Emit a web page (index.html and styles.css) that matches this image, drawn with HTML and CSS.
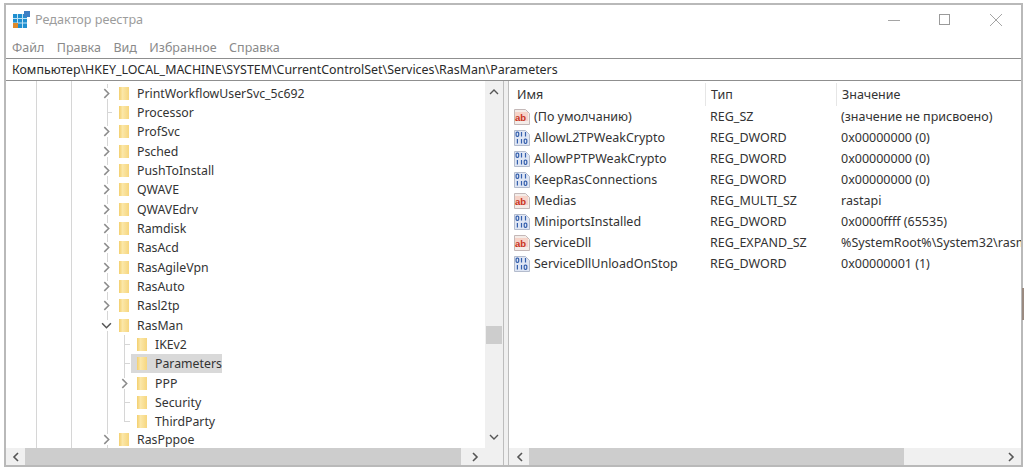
FILE: index.html
```html
<!DOCTYPE html>
<html lang="ru">
<head>
<meta charset="utf-8">
<title>Редактор реестра</title>
<link rel="stylesheet" href="styles.css">
</head>
<body>
<svg class="defs" width="0" height="0">
  <defs>
    <linearGradient id="fg" x1="0" x2="1" y1="0" y2="0">
      <stop offset="0" stop-color="#f3cf6e"/>
      <stop offset=".35" stop-color="#fbe7a8"/>
      <stop offset="1" stop-color="#f6d67f"/>
    </linearGradient>
  </defs>
  <symbol id="folder" viewBox="0 0 10 13">
    <path d="M0 0h10v13H0z" fill="url(#fg)"/>
  </symbol>
  <symbol id="chev-r" viewBox="0 0 10 10"><path d="M3 1l4 4-4 4" fill="none" stroke="#8c8c8c" stroke-width="1.4"/></symbol>
  <symbol id="chev-d" viewBox="0 0 10 10"><path d="M1 3l4 4 4-4" fill="none" stroke="#555" stroke-width="1.4"/></symbol>
  <symbol id="ic-bin" viewBox="0 0 18 18">
    <path d="M1.500 1.500h11l4 4v11h-15z" fill="#dfe6f4" stroke="#b4bccd"/>
    <g fill="none" stroke="#3560ad" stroke-width="1.200">
      <rect x="3.100" y="3.100" width="2.600" height="4.200" rx="1"/>
      <path d="M8.500 3v4.500M12.500 3v4.500"/>
      <path d="M4.400 10v4.500M8.500 10v4.500"/>
      <rect x="11.200" y="10.100" width="2.600" height="4.200" rx="1"/>
    </g>
  </symbol>
</svg>
<div class="sliver"></div>
<div class="window">
  <header class="titlebar">
    <svg class="appicon" width="17" height="17" viewBox="0 0 17 17">
      <rect x="0" y="3" width="14" height="14" fill="#1f8fd0"/>
      <path d="M0 7.500h14M0 12h14M4.500 3v14M9.500 3v14" stroke="#bfe3f5" stroke-width="1"/>
      <rect x="0" y="12" width="5" height="5" fill="#e08a2a"/>
      <rect x="11" y="0" width="6" height="6" fill="#3d7fc4"/>
    </svg>
    <span class="title">Редактор реестра</span>
    <div class="winctl">
      <svg width="16" height="16" viewBox="0 0 16 16"><path d="M2 8.500h12" stroke="#a5a5a5"/></svg>
      <svg width="16" height="16" viewBox="0 0 16 16"><rect x="2.500" y="2.500" width="10" height="10" fill="none" stroke="#9a9a9a"/></svg>
      <svg width="16" height="16" viewBox="0 0 16 16"><path d="M2 2l12 12M14 2L2 14" stroke="#a5a5a5"/></svg>
    </div>
  </header>
  <nav class="menu">
    <span>Файл</span><span>Правка</span><span>Вид</span><span>Избранное</span><span>Справка</span>
  </nav>
  <div class="address">Компьютер\HKEY_LOCAL_MACHINE\SYSTEM\CurrentControlSet\Services\RasMan\Parameters</div>
  <main class="panes">
    <section class="pane pane-left">
      <div class="pane-body">
        <ul class="tree">
          <li class="row"><svg class="chev"><use href="#chev-r"/></svg><svg class="fld"><use href="#folder"/></svg><span>PrintWorkflowUserSvc_5c692</span></li>
          <li class="row leaf"><i class="chev"></i><svg class="fld"><use href="#folder"/></svg><span>Processor</span></li>
          <li class="row"><svg class="chev"><use href="#chev-r"/></svg><svg class="fld"><use href="#folder"/></svg><span>ProfSvc</span></li>
          <li class="row"><svg class="chev"><use href="#chev-r"/></svg><svg class="fld"><use href="#folder"/></svg><span>Psched</span></li>
          <li class="row"><svg class="chev"><use href="#chev-r"/></svg><svg class="fld"><use href="#folder"/></svg><span>PushToInstall</span></li>
          <li class="row"><svg class="chev"><use href="#chev-r"/></svg><svg class="fld"><use href="#folder"/></svg><span>QWAVE</span></li>
          <li class="row"><svg class="chev"><use href="#chev-r"/></svg><svg class="fld"><use href="#folder"/></svg><span>QWAVEdrv</span></li>
          <li class="row"><svg class="chev"><use href="#chev-r"/></svg><svg class="fld"><use href="#folder"/></svg><span>Ramdisk</span></li>
          <li class="row"><svg class="chev"><use href="#chev-r"/></svg><svg class="fld"><use href="#folder"/></svg><span>RasAcd</span></li>
          <li class="row"><svg class="chev"><use href="#chev-r"/></svg><svg class="fld"><use href="#folder"/></svg><span>RasAgileVpn</span></li>
          <li class="row"><svg class="chev"><use href="#chev-r"/></svg><svg class="fld"><use href="#folder"/></svg><span>RasAuto</span></li>
          <li class="row"><svg class="chev"><use href="#chev-r"/></svg><svg class="fld"><use href="#folder"/></svg><span>Rasl2tp</span></li>
          <li class="row"><svg class="chev"><use href="#chev-d"/></svg><svg class="fld"><use href="#folder"/></svg><span>RasMan</span></li>
          <li class="row child leaf"><i class="chev"></i><svg class="fld"><use href="#folder"/></svg><span>IKEv2</span></li>
          <li class="row child leaf selected"><i class="chev"></i><svg class="fld"><use href="#folder"/></svg><span>Parameters</span></li>
          <li class="row child"><svg class="chev"><use href="#chev-r"/></svg><svg class="fld"><use href="#folder"/></svg><span>PPP</span></li>
          <li class="row child leaf"><i class="chev"></i><svg class="fld"><use href="#folder"/></svg><span>Security</span></li>
          <li class="row child leaf last"><i class="chev"></i><svg class="fld"><use href="#folder"/></svg><span>ThirdParty</span></li>
          <li class="row"><svg class="chev"><use href="#chev-r"/></svg><svg class="fld"><use href="#folder"/></svg><span>RasPppoe</span></li>
        </ul>
        <div class="vscroll">
          <svg class="arrow" viewBox="0 0 10 10"><path d="M1 7l4-4 4 4" fill="none" stroke="#555" stroke-width="1.400"/></svg>
          <div class="vtrack"><div class="vthumb"></div></div>
          <svg class="arrow" viewBox="0 0 10 10"><path d="M1 3l4 4 4-4" fill="none" stroke="#555" stroke-width="1.400"/></svg>
        </div>
      </div>
      <div class="hscroll hscroll-left">
        <svg class="arrow" viewBox="0 0 10 10"><path d="M7 1L3 5l4 4" fill="none" stroke="#555" stroke-width="1.600"/></svg>
        <div class="hthumb"></div>
        <svg class="arrow" viewBox="0 0 10 10"><path d="M3 1l4 4-4 4" fill="none" stroke="#555" stroke-width="1.600"/></svg>
      </div>
    </section>
    <div class="splitter"></div>
    <section class="pane pane-right">
      <div class="list">
        <div class="list-row list-head"><span class="c-name">Имя</span><span class="c-type">Тип</span><span class="c-val">Значение</span></div>
        <div class="list-row"><span class="c-name"><svg class="ric" viewBox="0 0 18 18"><path d="M1.500 1.500h11l4 4v11h-15z" fill="#f4ece8" stroke="#c4b8b8"/><rect x="2" y="4" width="13" height="9" fill="#f6d3c8"/><text x="2" y="12.500" class="ab">ab</text></svg>(По умолчанию)</span><span class="c-type">REG_SZ</span><span class="c-val">(значение не присвоено)</span></div>
        <div class="list-row"><span class="c-name"><svg class="ric"><use href="#ic-bin"/></svg>AllowL2TPWeakCrypto</span><span class="c-type">REG_DWORD</span><span class="c-val">0x00000000 (0)</span></div>
        <div class="list-row"><span class="c-name"><svg class="ric"><use href="#ic-bin"/></svg>AllowPPTPWeakCrypto</span><span class="c-type">REG_DWORD</span><span class="c-val">0x00000000 (0)</span></div>
        <div class="list-row"><span class="c-name"><svg class="ric"><use href="#ic-bin"/></svg>KeepRasConnections</span><span class="c-type">REG_DWORD</span><span class="c-val">0x00000000 (0)</span></div>
        <div class="list-row"><span class="c-name"><svg class="ric" viewBox="0 0 18 18"><path d="M1.500 1.500h11l4 4v11h-15z" fill="#f4ece8" stroke="#c4b8b8"/><rect x="2" y="4" width="13" height="9" fill="#f6d3c8"/><text x="2" y="12.500" class="ab">ab</text></svg>Medias</span><span class="c-type">REG_MULTI_SZ</span><span class="c-val">rastapi</span></div>
        <div class="list-row"><span class="c-name"><svg class="ric"><use href="#ic-bin"/></svg>MiniportsInstalled</span><span class="c-type">REG_DWORD</span><span class="c-val">0x0000ffff (65535)</span></div>
        <div class="list-row"><span class="c-name"><svg class="ric" viewBox="0 0 18 18"><path d="M1.500 1.500h11l4 4v11h-15z" fill="#f4ece8" stroke="#c4b8b8"/><rect x="2" y="4" width="13" height="9" fill="#f6d3c8"/><text x="2" y="12.500" class="ab">ab</text></svg>ServiceDll</span><span class="c-type">REG_EXPAND_SZ</span><span class="c-val">%SystemRoot%\System32\rasmans.dll</span></div>
        <div class="list-row"><span class="c-name"><svg class="ric"><use href="#ic-bin"/></svg>ServiceDllUnloadOnStop</span><span class="c-type">REG_DWORD</span><span class="c-val">0x00000001 (1)</span></div>
      </div>
      <div class="hscroll hscroll-right">
        <svg class="arrow" viewBox="0 0 10 10"><path d="M7 1L3 5l4 4" fill="none" stroke="#555" stroke-width="1.600"/></svg>
        <div class="hthumb"></div>
        <svg class="arrow" viewBox="0 0 10 10"><path d="M3 1l4 4-4 4" fill="none" stroke="#555" stroke-width="1.600"/></svg>
      </div>
    </section>
  </main>
</div>
</body>
</html>
```
FILE: styles.css
```css
* { box-sizing: border-box; }
html, body { margin: 0; height: 468px; overflow: hidden; background: #fff; }
body {
  padding: 3px 1px 1px 4px;
  font-family: "Noto Sans", "Open Sans", sans-serif;
  font-size: 12.5px;
  color: #333;
}
.defs { display: block; height: 0; position: absolute; }
.ab { font: bold 9.5px "Liberation Sans", sans-serif; fill: #c8321e; }
.sliver { position: absolute; right: 0; top: 288px; width: 2px; height: 32px; background: #9a8a80; z-index: 2; }

.window {
  height: 464px;
  display: flex;
  flex-direction: column;
  border: 2px solid #b9b9b9;
  background: #fff;
}

.titlebar { height: 29px; display: flex; align-items: center; padding-left: 7px; flex: none; }
.appicon { flex: none; margin-right: 5px; }
.title { color: #9c9c9c; font-size: 12.6px; }
.winctl { margin-left: auto; display: flex; gap: 35px; padding-right: 17px; }

.menu { height: 24px; display: flex; gap: 12.5px; align-items: center; padding: 3px 0 0 6px; color: #8a8a8a; flex: none; }
.address {
  height: 23px; flex: none; padding-left: 6px; line-height: 22px; font-size: 12.42px;
  border-top: 1px solid #8f8f8f; border-bottom: 1px solid #8f8f8f;
  color: #2a2a2a; white-space: nowrap;
}

.panes { flex: 1; display: flex; min-height: 0; }
.pane { display: flex; flex-direction: column; min-width: 0; }
.pane-left { width: 497px; flex: none; }
.pane-right { flex: 1; overflow: hidden; }
.splitter { width: 6px; flex: none; background: #f0f0f0; border-left: 1px solid #bdbdbd; border-right: 1px solid #bdbdbd; }
.pane-body { flex: 1; display: flex; min-height: 0; }

.tree {
  flex: 1; margin: 0; padding: 2.5px 0 0; list-style: none; overflow: hidden; font-size: 12.3px;
  background:
    linear-gradient(#d6d6d6, #d6d6d6) 30px 0 / 1px 100% no-repeat,
    linear-gradient(#d6d6d6, #d6d6d6) 65px 0 / 1px 100% no-repeat;
}
.row {
  position: relative;
  height: 19.33px;
  display: flex;
  align-items: center;
  padding-left: 95px;
  white-space: nowrap;
  background: linear-gradient(#d6d6d6, #d6d6d6) 101px 0 / 1px 100% no-repeat;
}
.row:last-child { height: 16.5px; }
.row .chev { width: 11px; height: 11px; flex: none; background: #fff; }
.row .fld { width: 10px; height: 13px; margin-left: 7px; margin-right: 8px; flex: none; }
.row.leaf > .chev { background: linear-gradient(#d6d6d6, #d6d6d6) 6px 5px / 5px 1px no-repeat; }
.row.child { padding-left: 113px; background: linear-gradient(#d6d6d6, #d6d6d6) 101px 0 / 1px 100% no-repeat, linear-gradient(#d6d6d6, #d6d6d6) 118px 0 / 1px 100% no-repeat; }
.row.child.last { background: linear-gradient(#d6d6d6, #d6d6d6) 101px 0 / 1px 100% no-repeat, linear-gradient(#d6d6d6, #d6d6d6) 118px 0 / 1px 10px no-repeat; }
.row.selected::before {
  content: ""; position: absolute; left: 125px; top: 0; width: 91px; height: 100%; background: #d9d9d9; z-index: 0;
}
.row > * { position: relative; z-index: 1; }

.vscroll { width: 18px; flex: none; display: flex; flex-direction: column; align-items: center; background: #f0f0f0; padding: 6px 0; }
.vtrack { flex: 1; width: 100%; position: relative; }
.vthumb { position: absolute; left: 1px; right: 1px; top: 229px; height: 18px; background: #cdcdcd; }
.arrow { width: 10px; height: 10px; flex: none; }

.hscroll { height: 17px; flex: none; display: flex; align-items: center; background: #f0f0f0; padding: 0 5px; gap: 4px; }
.hthumb { height: 100%; background: #cdcdcd; }
.hscroll-left { padding-right: 23px; }
.hscroll-left .hthumb { flex: 1; margin-right: 5px; }
.hscroll-right { padding-left: 6px; }
.hscroll-right .hthumb { width: 375px; margin-right: auto; }

.list { flex: 1; padding-top: 2px; overflow: hidden; }
.list-row { display: grid; grid-template-columns: 196px 131px 400px; height: 21px; align-items: center; white-space: nowrap; }
.list-head { height: 23px; }
.list-head > span + span { border-left: 1px solid #e6e6e6; }
.list-head > span { height: 100%; line-height: 23px; }
.list-head .c-name { padding-left: 8px; }
.c-name { display: flex; align-items: center; padding-left: 4px; overflow: hidden; }
.c-type, .c-val { padding-left: 5px; overflow: hidden; }
.ric { width: 18px; height: 18px; flex: none; margin-right: 3px; }
```
